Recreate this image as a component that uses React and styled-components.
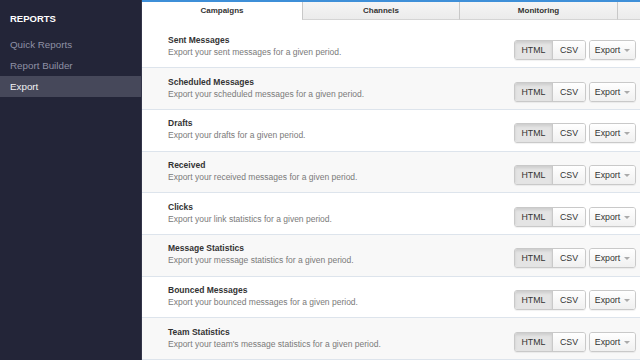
import React from "react";
import styled, { createGlobalStyle } from "styled-components";

const Global = createGlobalStyle`
  html, body { margin: 0; padding: 0; height: 100%; }
  body { font-family: "Liberation Sans", Arial, sans-serif; background: #fff; }
  #root { height: 100%; }
`;

const Page = styled.div`
  display: flex;
  width: 640px;
  height: 360px;
  overflow: hidden;
`;

const Sidebar = styled.nav`
  width: 141px;
  flex: 0 0 141px;
  background: #232538;
  border-right: 1px solid #34364a;
  padding-top: 10px;
  box-sizing: content-box;
`;

const SideHeader = styled.div`
  color: #fff;
  font-weight: bold;
  font-size: 9.5px;
  line-height: 18px;
  padding-left: 10px;
  margin-bottom: 6px;
`;

const SideItem = styled.div`
  font-size: 9.8px;
  line-height: 21px;
  height: 21px;
  padding-left: 10px;
  color: ${(p) => (p.$active ? "#f2f2f4" : "#8f91a5")};
  background: ${(p) => (p.$active ? "#46485a" : "transparent")};
`;

const Main = styled.main`
  flex: 1;
  display: flex;
  flex-direction: column;
  border-top: 2px solid #3e8fd8;
  min-width: 0;
`;

const Tabs = styled.div`
  display: flex;
  height: 22px;
`;

const Tab = styled.div`
  box-sizing: border-box;
  width: ${(p) => p.$w}px;
  flex: 0 0 auto;
  display: flex;
  align-items: center;
  justify-content: center;
  font-size: 8px;
  font-weight: bold;
  color: #333;
  background: ${(p) => (p.$active ? "#fff" : "linear-gradient(#f5f5f5, #ebebeb)")};
  border-left: ${(p) => (p.$first ? "none" : "1px solid #c8c8c8")};
  border-bottom: ${(p) => (p.$active ? "1px solid transparent" : "1px solid #d4d4d4")};
`;

const List = styled.div`
  padding-top: 6.5px;
`;

const Row = styled.div`
  box-sizing: border-box;
  height: 41.7px;
  display: flex;
  align-items: flex-start;
  justify-content: space-between;
  padding: 0 4px 0 26px;
  background: ${(p) => (p.$alt ? "#f8f8f8" : "#fff")};
  border-bottom: 1px solid #dde4ec;
`;

const Info = styled.div`
  padding-top: 7.5px;
`;

const Title = styled.div`
  font-size: 8.5px;
  font-weight: bold;
  color: #333;
  line-height: 12px;
`;

const Desc = styled.div`
  font-size: 8.5px;
  color: #7a7a7a;
  line-height: 12px;
`;

const Actions = styled.div`
  display: flex;
  gap: 3px;
  margin-top: 13.5px;
`;

const Group = styled.div`
  display: flex;
  border: 1px solid #c9c9c9;
  border-radius: 3px;
  overflow: hidden;
  box-shadow: 0 1px 1px rgba(0, 0, 0, 0.06);
`;

const Btn = styled.div`
  box-sizing: border-box;
  height: 18px;
  width: ${(p) => p.$w}px;
  display: flex;
  align-items: center;
  justify-content: center;
  gap: 4px;
  font-size: 8.8px;
  color: #333;
  background: ${(p) => (p.$active ? "#e4e4e4" : "linear-gradient(#ffffff, #f0f0f0)")};
  box-shadow: ${(p) => (p.$active ? "inset 0 2px 3px rgba(0,0,0,0.1)" : "none")};
  & + & { border-left: 1px solid #c9c9c9; }
`;

const Caret = styled.span`
  width: 0;
  height: 0;
  border-left: 3px solid transparent;
  border-right: 3px solid transparent;
  border-top: 3px solid #aaa;
  margin-top: 1px;
`;

const rows = [
  ["Sent Messages", "Export your sent messages for a given period."],
  ["Scheduled Messages", "Export your scheduled messages for a given period."],
  ["Drafts", "Export your drafts for a given period."],
  ["Received", "Export your received messages for a given period."],
  ["Clicks", "Export your link statistics for a given period."],
  ["Message Statistics", "Export your message statistics for a given period."],
  ["Bounced Messages", "Export your bounced messages for a given period."],
  ["Team Statistics", "Export your team's message statistics for a given period."],
];

export default function App() {
  return (
    <Page>
      <Global />
      <Sidebar>
        <SideHeader>REPORTS</SideHeader>
        <SideItem>Quick Reports</SideItem>
        <SideItem>Report Builder</SideItem>
        <SideItem $active>Export</SideItem>
      </Sidebar>
      <Main>
        <Tabs>
          <Tab $w={160} $active $first>Campaigns</Tab>
          <Tab $w={157}>Channels</Tab>
          <Tab $w={158}>Monitoring</Tab>
          <Tab $w={24}></Tab>
        </Tabs>
        <List>
          {rows.map(([t, d], i) => (
            <Row key={t} $alt={i % 2 === 1}>
              <Info>
                <Title>{t}</Title>
                <Desc>{d}</Desc>
              </Info>
              <Actions>
                <Group>
                  <Btn $w={37} $active>HTML</Btn>
                  <Btn $w={33}>CSV</Btn>
                </Group>
                <Group>
                  <Btn $w={45}>Export<Caret /></Btn>
                </Group>
              </Actions>
            </Row>
          ))}
        </List>
      </Main>
    </Page>
  );
}
